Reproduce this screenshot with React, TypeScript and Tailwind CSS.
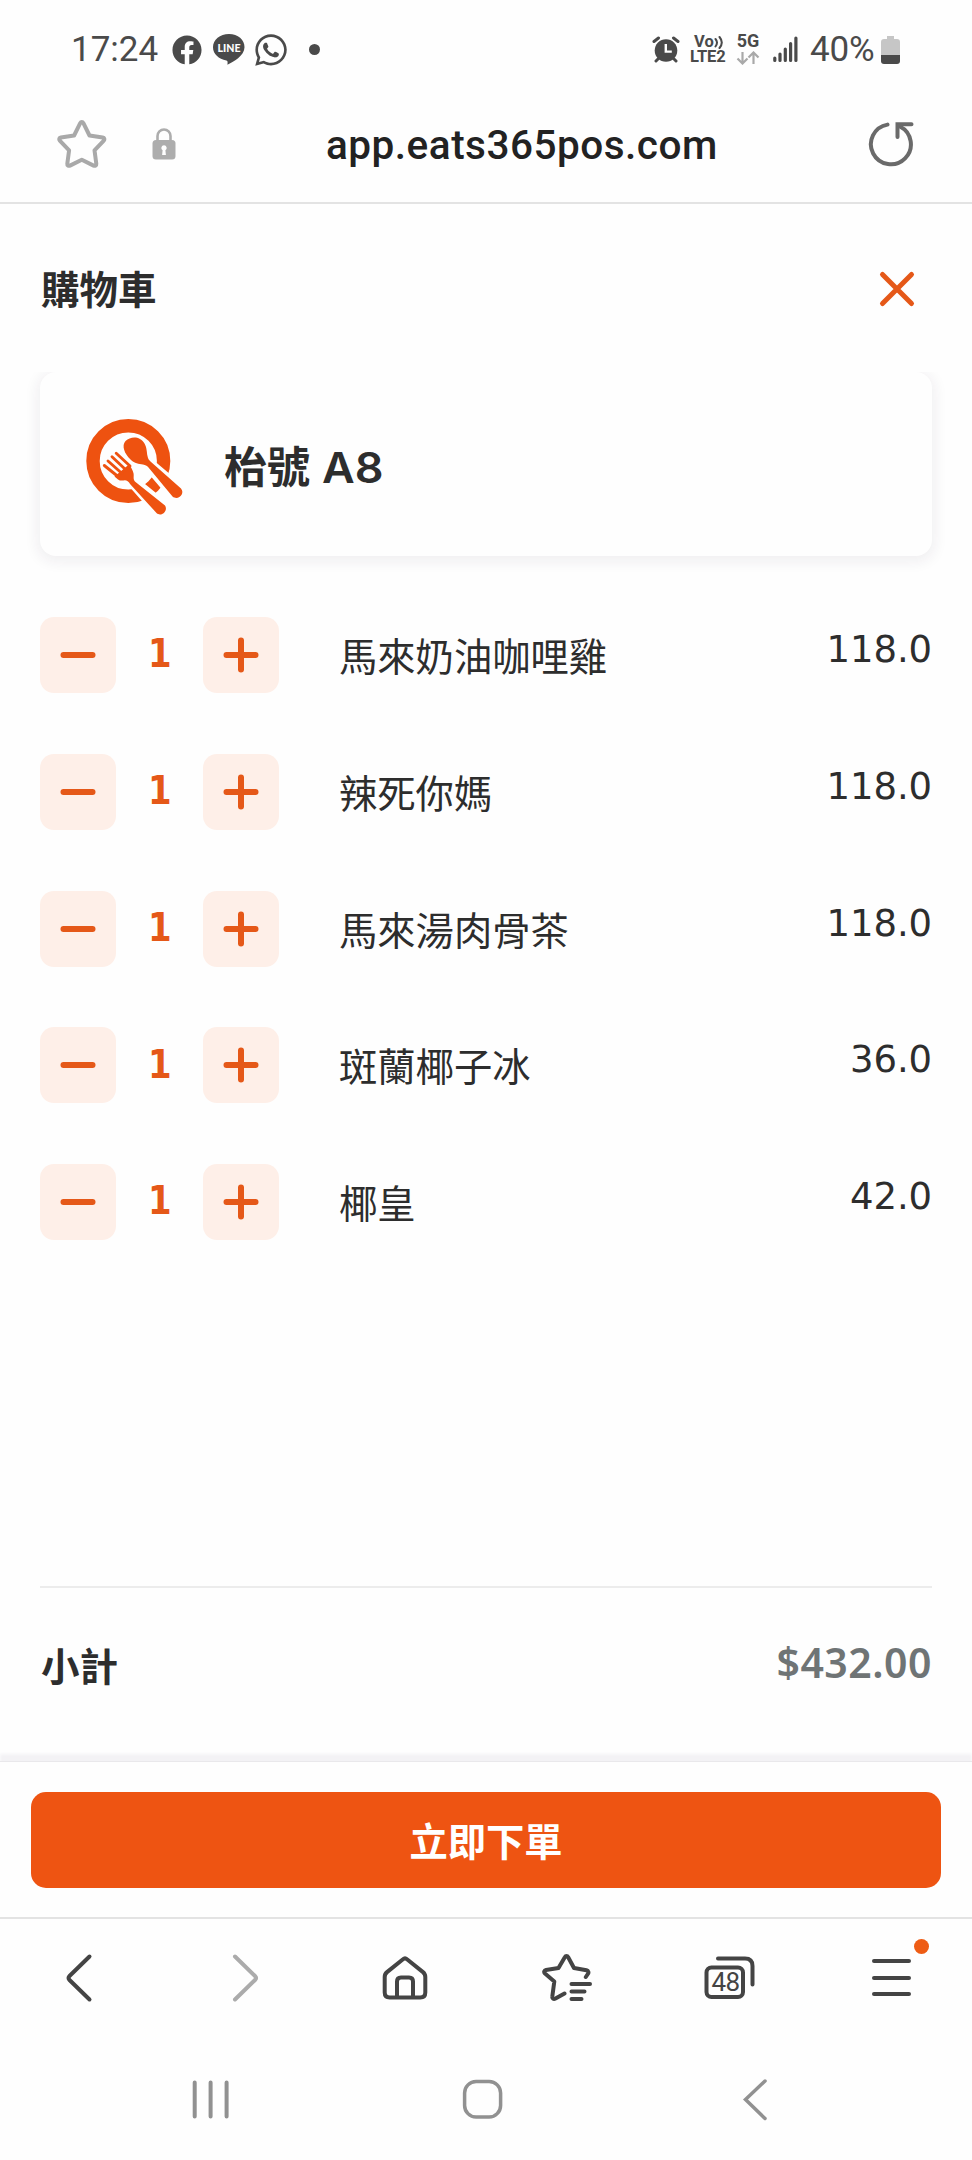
import { useState } from "react";
import { FaFacebook, FaWhatsapp } from "react-icons/fa";

type CartItem = {
  name: string;
  price: number;
  qty: number;
};

const INITIAL_ITEMS: CartItem[] = [
  { name: "馬來奶油咖哩雞", price: 118, qty: 1 },
  { name: "辣死你媽", price: 118, qty: 1 },
  { name: "馬來湯肉骨茶", price: 118, qty: 1 },
  { name: "斑蘭椰子冰", price: 36, qty: 1 },
  { name: "椰皇", price: 42, qty: 1 },
];

function StatusBar() {
  return (
    <header className="flex h-[98px] shrink-0 items-start pl-[71px] pr-[71px] font-[Roboto] text-[#4a4a4a]">
      <span className="mt-[29px] w-[88px] text-[35px] leading-[42px]">17:24</span>
      <FaFacebook className="ml-[13px] mt-[35px] size-[30px]" />
      <svg className="ml-[10px] mt-[33px]" width="34" height="33" viewBox="0 0 34 33">
        <path d="M17 1C8 1 1 6.900 1 14.300c0 6.600 5.700 12 13.400 13.100 1.600.4 1.300 2 1 4.400 5.800-2.600 17.100-9 17.100-17.500C32.500 6.900 26 1 17 1z" fill="currentColor" />
        <text x="17" y="19" textAnchor="middle" fontSize="11" fontWeight="900" fontFamily="Lato" fill="#fff" textLength="23" lengthAdjust="spacingAndGlyphs">
          LINE
        </text>
      </svg>
      <FaWhatsapp className="ml-[7px] mt-[32px] size-[36px]" />
      <span className="ml-[20px] mt-[44px] size-[11px] rounded-full bg-[#4a4a4a]" />

      <div className="ml-auto flex items-start">
        <svg className="mt-[36px]" width="28" height="27" viewBox="0 0 28 27">
          <circle cx="14" cy="14.500" r="11.300" fill="currentColor" />
          <path d="M2 5.500 6.500 2M26 5.500 21.500 2M6.500 22.500 4 25M21.500 22.500 24 25" stroke="currentColor" strokeWidth="3" strokeLinecap="round" />
          <path d="M13.800 8v7.600h6" stroke="#fff" strokeWidth="2.400" fill="none" />
        </svg>
        <div className="ml-[10px] mt-[34px] flex w-[36px] flex-col text-[16.500px] font-bold leading-[16px]">
          <span className="flex h-[15px] pl-[4px]">
            Vo
            <svg width="11" height="16" viewBox="0 0 11 16" fill="none" stroke="currentColor" strokeWidth="2" strokeLinecap="round">
              <path d="M1.500 5q3 3.500 0 7.500M5.500 3q4.600 5.500 0 11" />
            </svg>
          </span>
          <span className="tracking-[-0.1px]">LTE2</span>
        </div>
        <div className="ml-[10px] mt-[32px] flex w-[24px] flex-col items-center text-[18px] font-bold leading-[18px]">
          <span>5G</span>
          <svg className="mt-px" width="24" height="14" viewBox="0 0 24 14" fill="none" stroke="#a9a9a9" strokeWidth="2.200">
            <path d="M6.500 1v11M1.500 7.500l5 5 5-5M17.500 13V2M12.500 6.500l5-5 5 5" />
          </svg>
        </div>
        <svg className="ml-[13px] mt-[36px]" width="25" height="27" viewBox="0 0 25 27" stroke="currentColor" strokeWidth="3.200" strokeLinecap="round">
          <path d="M1.800 22v2.500M7 18v6.500M12.300 13v11.500M17.600 7.500v17M22.900 2v22.500" />
        </svg>
        <span className="ml-[12px] mt-[29px] w-[67px] text-[35px] leading-[42px] tracking-[-0.2px]">40%</span>
        <svg className="ml-[4px] mr-px mt-[36px]" width="19" height="28" viewBox="0 0 19 28">
          <path d="M6 0h7v3h3a3 3 0 0 1 3 3v13H0V6a3 3 0 0 1 3-3h3z" fill="#c6c6c6" />
          <path d="M0 19h19v6a3 3 0 0 1-3 3H3a3 3 0 0 1-3-3z" fill="#4a4a4a" />
        </svg>
      </div>
    </header>
  );
}

function AddressBar() {
  return (
    <div className="flex h-[106px] shrink-0 items-start border-b-2 border-[#e3e3e3] pl-[56px] pr-[58px]">
      <svg className="mt-[21px]" width="52" height="50" viewBox="0 0 52 50" fill="none" stroke="#a9a9a9" strokeWidth="4" strokeLinejoin="round">
        <path d="M24.200 4.200c.8-1.500 2.400-1.500 3.200 0l6.100 12.300 13.200 2c1.700.3 2.200 1.900 1.100 3.100l-9.300 9.700 1.800 13.500c.2 1.600-1.200 2.500-2.700 1.800L25.800 40.700 14 46.600c-1.500.7-2.900-.2-2.700-1.800l1.800-13.500-9.300-9.700c-1.100-1.200-.6-2.800 1.100-3.100l13.200-2z" />
      </svg>
      <svg className="ml-[43px] mt-[30px]" width="26" height="32" viewBox="0 0 26 32">
        <path d="M6.500 14V8a6.500 6.500 0 0 1 13 0v6" fill="none" stroke="#adadad" strokeWidth="2.600" />
        <rect x="1.500" y="12" width="23" height="19.500" rx="3.500" fill="#adadad" />
        <path d="M13 17.200a2.700 2.700 0 0 1 1.400 5l.5 4.800h-3.800l.5-4.800a2.700 2.700 0 0 1 1.400-5z" fill="#fff" />
      </svg>
      <span className="ml-[149px] mt-[24px] w-[400px] whitespace-nowrap font-[Roboto] text-[40.500px] font-medium leading-[47px] tracking-[0.500px] text-[#222]">
        app.eats365pos.com
      </span>
      <svg className="ml-auto mt-[22px]" width="48" height="48" viewBox="0 0 48 48" fill="none" stroke="#6a6a6a" strokeWidth="4" strokeLinecap="round">
        <path d="M20.500 4.600A20 20 0 1 0 33 6.500" transform="translate(1 0)" />
        <path d="M44.500 4.200H30.500V17" transform="translate(1 0)" />
      </svg>
    </div>
  );
}

function PlateIcon() {
  return (
    <svg className="ml-[44px] mt-[43px] shrink-0" width="102" height="104" viewBox="0 0 102 104">
      <circle cx="44.300" cy="46" r="35.300" fill="none" stroke="#ee5210" strokeWidth="13.400" />
      {/* white pass first so the cutlery is cut out of the rim */}
      <g stroke="#fefefe" strokeWidth="7" strokeLinejoin="round" fill="#fefefe">
        <path d="M61 49 88.500 81.500c4.500 4 12.500-2 9-8L64.300 45.500z" />
        <path d="M45 66 72.700 97.500c5 4 12-2 8.500-7.500L49.300 64z" />
      </g>
      <g fill="#ee5210">
        <path d="M41.500 26C47 21 56 21 60.500 28.500c2.500 4.500 2.200 9 3 12.500.5 2.500 1.300 4 3 5.500L97 73.500c4.500 5.500-3 12.500-8.500 8L64.500 52.500c-1.600-1.800-3.200-2.600-5.500-3-4.500-.8-8-.8-12.500-5-6-5.700-9.200-13.800-5-18.500z" />
        <path d="M30.500 61.500 34 64.500c3.800 2.700 6.700-.7 9.700 1.800 1.300 1 2 2.200 2.800 3.200L72.500 98c4.800 4.500 12-2.500 8.500-7.500L51.500 67c-3-2.600-1.300-5.500-2-8.700-.7-3.200-2.500-6-4.300-9z" />
      </g>
      <path d="M20.300 50.500 34 61.500M24 46 38 58.500M28 41.800 42 55M32.200 38.200 46 51" stroke="#ee5210" strokeWidth="2.900" strokeLinecap="round" />
    </svg>
  );
}

type StepButtonProps = {
  label: string;
  plus?: boolean;
  onClick: () => void;
};

function StepButton({ label, plus, onClick }: StepButtonProps) {
  return (
    <button
      type="button"
      aria-label={label}
      onClick={onClick}
      className="flex size-[76px] shrink-0 items-center justify-center rounded-[14px] bg-[#feefe8]"
    >
      <svg width="36" height="36" viewBox="0 0 36 36" stroke="#e55818" strokeWidth="6" strokeLinecap="round">
        <path d={plus ? "M3.500 18h29M18 3.500v29" : "M3.500 18h29"} />
      </svg>
    </button>
  );
}

function CartRow({ item, onChange }: { item: CartItem; onChange: (delta: number) => void }) {
  return (
    <li className="flex h-[76px] items-center">
      <StepButton label="減少" onClick={() => onChange(-1)} />
      <span className="w-[87px] pb-[2px] pl-px text-center font-['DejaVu_Sans'] text-[39.500px] font-bold leading-none text-[#e55818]">
        <span className="inline-block scale-x-[0.86]">{item.qty}</span>
      </span>
      <StepButton label="增加" plus onClick={() => onChange(1)} />
      <span className="ml-[60px] font-['Noto_Sans_CJK_TC'] text-[38.300px] leading-[56px]">{item.name}</span>
      <span className="ml-auto pb-[10px] font-['DejaVu_Sans'] text-[37px] leading-[44px] tracking-[-0.1px]">
        {item.price.toFixed(1)}
      </span>
    </li>
  );
}

function BrowserNav() {
  return (
    <nav className="h-[122px] shrink-0 border-t-2 border-[#e3e3e3] text-[#444]">
      <div className="flex items-start pl-[65px] pr-[40px] pt-[34px]">
        <svg width="28" height="50" viewBox="0 0 28 50" fill="none" stroke="currentColor" strokeWidth="4" strokeLinecap="round" strokeLinejoin="round">
          <path d="M24.500 3.500 4.500 23q-2 2 0 4L24.500 46.500" />
        </svg>
        <svg className="ml-[138px]" width="28" height="50" viewBox="0 0 28 50" fill="none" stroke="#ababab" strokeWidth="4" strokeLinecap="round" strokeLinejoin="round">
          <path d="m4 3.500 20 19.500q2 2 0 4L4 46.500" />
        </svg>
        <svg className="ml-[122px]" width="48" height="50" viewBox="0 0 48 50" fill="none" stroke="currentColor" strokeWidth="4" strokeLinejoin="round">
          <path d="M22 6.300q2-1.800 4 0l16 12.800q2.300 1.900 2.300 4.900v15.500q0 5-5 5H8.700q-5 0-5-5V24q0-3 2.300-4.900z" />
          <path d="M16 44.500V28.500q0-4 4-4h8q4 0 4 4v16" />
        </svg>
        <svg className="ml-[113px]" width="52" height="50" viewBox="0 0 52 50" fill="none" stroke="currentColor" strokeWidth="4" strokeLinecap="round" strokeLinejoin="round">
          <path d="M22.500 40.500 13.500 45.500c-2 1-3.500-.2-3.200-2l2-15L3 20.500c-1.500-1.500-.8-3.200 1-3.600l12.500-1.900L22.800 4.300c.9-1.700 2.500-1.700 3.400 0L32 15l12.500 2.300c2 .5 2.500 2.200 1.300 3.700l-2 3" />
          <path d="M29.500 31h18.500M29.500 38.500h13M29.500 46h10" />
        </svg>
        <div className="relative ml-[109px] h-[50px] w-[54px]">
          <svg width="54" height="50" viewBox="0 0 54 50" fill="none" stroke="currentColor" strokeWidth="4" strokeLinecap="round">
            <rect x="3.500" y="14.500" width="36.500" height="29.500" rx="5" />
            <path d="M15 5.500h27q7.500 0 7.500 7.500V31.500" />
          </svg>
          <span className="absolute left-[2px] top-[14px] w-[41px] text-center font-[Roboto] text-[26px] leading-[31px] tracking-[-0.5px]">
            48
          </span>
        </div>
        <div className="relative ml-auto flex w-[60px] flex-col pt-[6px]">
          <span className="h-[4px] w-[39px] rounded-full bg-[#444]" />
          <span className="mt-[12.500px] h-[4px] w-[39px] rounded-full bg-[#444]" />
          <span className="mt-[12.500px] h-[4px] w-[39px] rounded-full bg-[#444]" />
          <span className="absolute left-[41.500px] top-[-14px] size-[15px] rounded-full bg-[#ee5c14]" />
        </div>
      </div>
    </nav>
  );
}

function SystemNav() {
  return (
    <div className="flex flex-1 items-start pl-[192px] pt-[40px]">
      <svg width="38" height="42" viewBox="0 0 38 42" stroke="#919191" strokeWidth="4" strokeLinecap="round">
        <path d="M2.700 3.500v34M18.600 3.500v34M34.600 3.500v34" />
      </svg>
      <svg className="ml-[231px]" width="44" height="42" viewBox="0 0 44 42" fill="none" stroke="#919191" strokeWidth="3.500">
        <rect x="3.600" y="2.500" width="36" height="35.500" rx="11.500" />
      </svg>
      <svg className="ml-[237px]" width="28" height="44" viewBox="0 0 28 44" fill="none" stroke="#919191" strokeWidth="3.500" strokeLinecap="round">
        <path d="M23 2 3.500 20.500 23 39.500" />
      </svg>
    </div>
  );
}

export default function App() {
  const [items, setItems] = useState(INITIAL_ITEMS);

  const changeQty = (index: number, delta: number) => {
    setItems((prev) => prev.map((it, i) => (i === index ? { ...it, qty: Math.max(0, it.qty + delta) } : it)));
  };

  const subtotal = items.reduce((sum, it) => sum + it.price * it.qty, 0);

  return (
    <div className="flex h-[2160px] w-[972px] flex-col overflow-hidden bg-[#fefefe] font-['Noto_Sans_CJK_TC',sans-serif] text-[#2d2d2d]">
      <StatusBar />
      <AddressBar />

      <main className="flex h-[1557px] shrink-0 flex-col">
        <div className="flex h-[168px] shrink-0 items-start justify-between pl-[41px] pr-[56px]">
          <h1 className="mt-[55px] text-[38.500px] font-bold leading-[56px]">購物車</h1>
          <button type="button" aria-label="關閉" className="mt-[66px]">
            <svg width="38" height="38" viewBox="0 0 38 38" stroke="#e55818" strokeWidth="5" strokeLinecap="round">
              <path d="m4.500 4.500 29 29M33.500 4.500l-29 29" />
            </svg>
          </button>
        </div>

        {/* the scroll area cuts the card's shadow off at the top */}
        <section className="h-[1214px] shrink-0 overflow-hidden px-[40px]">
          <div className="flex h-[184px] items-start rounded-[16px] bg-[#fefefe] shadow-[0_3px_14px_3px_rgba(45,35,65,0.065)]">
            <PlateIcon />
            <h2 className="ml-[38px] mt-[61px] whitespace-nowrap text-[43px] font-bold leading-[62px]">
              枱號 <span className="ml-[2px] inline-block origin-left scale-x-[1.07] font-[Inter] text-[42px] font-semibold">A8</span>
            </h2>
          </div>
          <ul className="mt-[61px] flex flex-col gap-[60.800px]">
            {items.map((item, i) => (
              <CartRow key={item.name} item={item} onChange={(delta) => changeQty(i, delta)} />
            ))}
          </ul>
        </section>

        <div className="mx-[40px] flex flex-1 items-start justify-between border-t-2 border-[#ececec]">
          <span className="ml-px mt-[48px] text-[38.500px] font-bold leading-[56px]">小計</span>
          <span className="mt-[46px] font-['Noto_Sans'] text-[41px] font-semibold leading-[56px] tracking-[0.500px] text-[#6f7475]">
            ${subtotal.toFixed(2)}
          </span>
        </div>
      </main>

      <div className="flex h-[156px] shrink-0 items-start border-t border-[#e9e8eb] px-[31px] pt-[30px] shadow-[0_-7px_3px_0_#f3f2f5]">
        <button
          type="button"
          className="h-[96px] w-full rounded-[15px] bg-[#ee5412] text-[38.300px] font-bold leading-[56px] text-white"
        >
          立即下單
        </button>
      </div>

      <BrowserNav />
      <SystemNav />
    </div>
  );
}
